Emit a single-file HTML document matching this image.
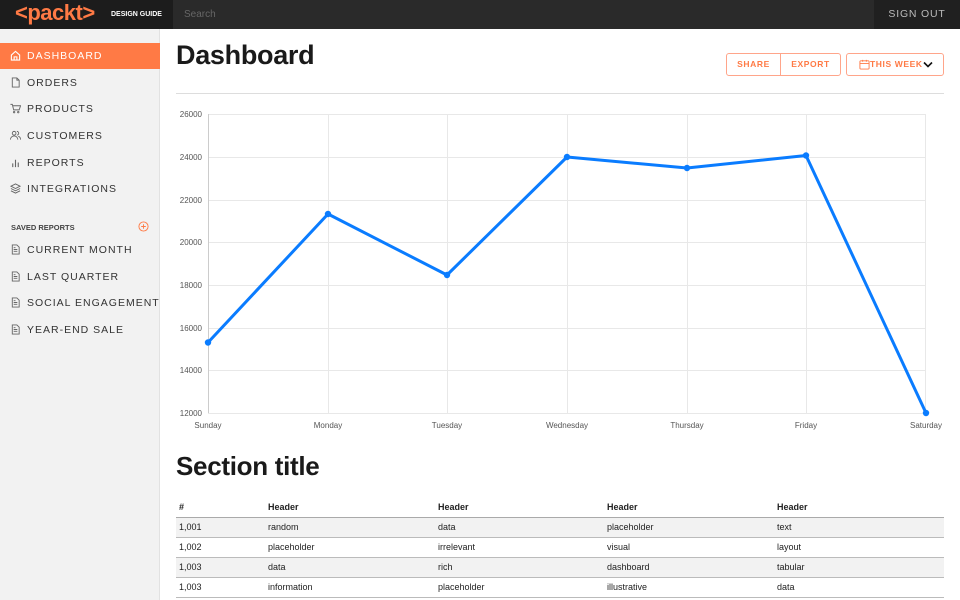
<!DOCTYPE html>
<html><head><meta charset="utf-8"><style>
*{margin:0;padding:0;box-sizing:border-box}
body{width:960px;height:600px;overflow:hidden;background:#fff;font-family:"Liberation Sans",sans-serif;position:relative}
.top{position:absolute;left:0;top:0;width:960px;height:29px;background:#2a2a2a}
.logo{position:absolute;left:0;top:0;width:173px;height:29px;background:#1c1c1c}
.logo .p{position:absolute;left:15px;top:1px;color:#ff7a45;font-size:22px;font-weight:bold;letter-spacing:-.5px;white-space:nowrap;line-height:24px}
.logo .dg{position:absolute;left:111px;top:11px;line-height:8px;color:#fff;font-size:7px;font-weight:bold;white-space:nowrap}
.search{position:absolute;left:184px;top:9px;color:#666;font-size:10px}
.so{position:absolute;right:0;top:0;width:86px;height:29px;background:#202020;color:#bbb;font-size:10.5px;letter-spacing:.8px;text-align:center;line-height:29px}
.side{position:absolute;left:0;top:29px;width:160px;height:571px;background:#f2f2f2;border-right:1px solid #e2e2e2}
.item{position:absolute;left:0;width:160px;height:26px;font-size:10.5px;letter-spacing:1px;color:#333;line-height:26px;padding-left:27px;white-space:nowrap}
.item.act{background:#ff7a45;color:#fff}
.item svg{position:absolute;left:10px;top:7px}
.sr{position:absolute;left:11px;font-size:7.5px;font-weight:bold;color:#444;white-space:nowrap}
h1{position:absolute;left:176px;top:40px;font-size:27px;font-weight:bold;color:#1a1a1a;letter-spacing:-.3px}
h2{position:absolute;left:176px;top:451px;font-size:26px;font-weight:bold;color:#1a1a1a;letter-spacing:-.3px}
.btn{position:absolute;top:53px;height:23px;border:1px solid #ffa58a;border-radius:3px;color:#ff7a45;font-size:8.5px;font-weight:bold;letter-spacing:.6px;line-height:21px;text-align:center;white-space:nowrap}
.hr{position:absolute;left:176px;top:93px;width:768px;height:1px;background:#ddd}
table{position:absolute;left:176px;top:498px;width:768px;border-collapse:collapse;font-size:9px;color:#222}
td,th{height:20px;text-align:left;padding-left:3px;border-bottom:1px solid #bbb}
th{font-weight:bold;height:19px;border-bottom:1px solid #aaa}
tr.g td{background:#f2f2f2}
</style></head><body>
<div class="top"></div>
<div class="logo"><span class="p">&lt;packt&gt;</span><span class="dg">DESIGN GUIDE</span></div>
<div class="search">Search</div>
<div class="so">SIGN OUT</div>
<div class="side">
<div class="item act" style="top:14px"><svg width="11" height="11" viewBox="0 0 12 12" fill="none" stroke="#fff" stroke-width="1.2"><path d="M1.5 5.5L6 1.5l4.5 4V11h-9z M4.5 11V7.5h3V11"/></svg>DASHBOARD</div>
<div class="item" style="top:41px"><svg width="11" height="11" viewBox="0 0 12 12" fill="none" stroke="#666" stroke-width="1"><path d="M2.5 1h5l2.5 2.5V11h-7.5z M7.5 1v2.5H10"/></svg>ORDERS</div>
<div class="item" style="top:67px"><svg width="11" height="11" viewBox="0 0 12 12" fill="none" stroke="#666" stroke-width="1"><path d="M.5 1.5h2l1.5 6h6l1.5-4.5H3"/><circle cx="4.5" cy="10" r=".8"/><circle cx="9" cy="10" r=".8"/></svg>PRODUCTS</div>
<div class="item" style="top:94px"><svg width="11" height="11" viewBox="0 0 12 12" fill="none" stroke="#666" stroke-width="1"><circle cx="4.5" cy="3.5" r="2"/><path d="M.5 10.5c0-2.5 2-4 4-4s4 1.5 4 4 M7.5 1.5a2 2 0 010 4 M9 6.8c1.5.5 2.5 1.8 2.5 3.7"/></svg>CUSTOMERS</div>
<div class="item" style="top:121px"><svg width="11" height="11" viewBox="0 0 12 12" fill="none" stroke="#666" stroke-width="1.2"><path d="M3 11V7 M6 11V3 M9 11V6"/></svg>REPORTS</div>
<div class="item" style="top:147px"><svg width="11" height="11" viewBox="0 0 12 12" fill="none" stroke="#666" stroke-width="1"><path d="M6 1l5 2.5L6 6 1 3.5z M1 6l5 2.5L11 6 M1 8.5L6 11l5-2.5"/></svg>INTEGRATIONS</div>
<div class="sr" style="top:194px">SAVED REPORTS</div>
<svg style="position:absolute;left:138px;top:192px" width="11" height="11" viewBox="0 0 12 12" fill="none" stroke="#ff7a45" stroke-width="1"><circle cx="6" cy="6" r="5"/><path d="M6 3.5v5M3.5 6h5"/></svg>
<div class="item" style="top:208px"><svg width="11" height="11" viewBox="0 0 12 12" fill="none" stroke="#666" stroke-width="1"><path d="M2.5 1h5l2.5 2.5V11h-7.5z M4 6h4M4 8h4M4 4h2"/></svg>CURRENT MONTH</div>
<div class="item" style="top:235px"><svg width="11" height="11" viewBox="0 0 12 12" fill="none" stroke="#666" stroke-width="1"><path d="M2.5 1h5l2.5 2.5V11h-7.5z M4 6h4M4 8h4M4 4h2"/></svg>LAST QUARTER</div>
<div class="item" style="top:261px"><svg width="11" height="11" viewBox="0 0 12 12" fill="none" stroke="#666" stroke-width="1"><path d="M2.5 1h5l2.5 2.5V11h-7.5z M4 6h4M4 8h4M4 4h2"/></svg>SOCIAL ENGAGEMENT</div>
<div class="item" style="top:288px"><svg width="11" height="11" viewBox="0 0 12 12" fill="none" stroke="#666" stroke-width="1"><path d="M2.5 1h5l2.5 2.5V11h-7.5z M4 6h4M4 8h4M4 4h2"/></svg>YEAR-END SALE</div>
</div>
<h1>Dashboard</h1>
<div class="btn" style="left:726px;width:55px;border-radius:3px 0 0 3px">SHARE</div>
<div class="btn" style="left:780px;width:61px;border-radius:0 3px 3px 0">EXPORT</div>
<div class="btn" style="left:846px;width:98px;text-align:left;padding-left:23px">THIS WEEK
<svg style="position:absolute;left:12px;top:5px" width="11" height="11" viewBox="0 0 12 12" fill="none" stroke="#ff7a45" stroke-width="1"><rect x="1" y="2" width="10" height="9" rx="1"/><path d="M1 5h10M4 1v2M8 1v2"/></svg>
<svg style="position:absolute;left:76px;top:6px" width="10" height="9" viewBox="0 0 10 9" fill="none" stroke="#111" stroke-width="1.6"><path d="M1 2.5l4 4 4-4"/></svg></div>
<div class="hr"></div>
<svg style="position:absolute;left:0;top:0" width="960" height="440">
<g stroke="#e8e8e8" stroke-width="1">
<path d="M208 114.5H926M208 157.5H926M208 200.5H926M208 242.5H926M208 285.5H926M208 328.5H926M208 370.5H926M208 413.5H926"/>
<path d="M328.5 114V413M447.5 114V413M567.5 114V413M687.5 114V413M806.5 114V413M925.5 114V413"/>
</g>
<path d="M208.5 114V413" stroke="#ccc"/>
<g font-family="Liberation Sans" font-size="8" fill="#555" text-anchor="end">
<text x="202" y="117">26000</text><text x="202" y="160">24000</text><text x="202" y="203">22000</text><text x="202" y="245">20000</text><text x="202" y="288">18000</text><text x="202" y="331">16000</text><text x="202" y="373">14000</text><text x="202" y="416">12000</text>
</g>
<g font-family="Liberation Sans" font-size="8" fill="#555" text-anchor="middle">
<text x="208" y="428">Sunday</text><text x="328" y="428">Monday</text><text x="447" y="428">Tuesday</text><text x="567" y="428">Wednesday</text><text x="687" y="428">Thursday</text><text x="806" y="428">Friday</text><text x="926" y="428">Saturday</text>
</g>
<polyline points="208,342.5 328,214 447,275 567,157 687,168 806,155.5 926,413" fill="none" stroke="#0a7cff" stroke-width="3" stroke-linejoin="round"/>
<g fill="#0a7cff"><circle cx="208" cy="342.5" r="3.2"/><circle cx="328" cy="214" r="3.2"/><circle cx="447" cy="275" r="3.2"/><circle cx="567" cy="157" r="3.2"/><circle cx="687" cy="168" r="3.2"/><circle cx="806" cy="155.5" r="3.2"/><circle cx="926" cy="413" r="3.2"/></g>
</svg>
<h2>Section title</h2>
<table>
<colgroup><col style="width:89px"><col style="width:170px"><col style="width:169px"><col style="width:170px"><col></colgroup>
<tr><th>#</th><th>Header</th><th>Header</th><th>Header</th><th>Header</th></tr>
<tr class="g"><td>1,001</td><td>random</td><td>data</td><td>placeholder</td><td>text</td></tr>
<tr><td>1,002</td><td>placeholder</td><td>irrelevant</td><td>visual</td><td>layout</td></tr>
<tr class="g"><td>1,003</td><td>data</td><td>rich</td><td>dashboard</td><td>tabular</td></tr>
<tr><td>1,003</td><td>information</td><td>placeholder</td><td>illustrative</td><td>data</td></tr>
</table>
</body></html>
